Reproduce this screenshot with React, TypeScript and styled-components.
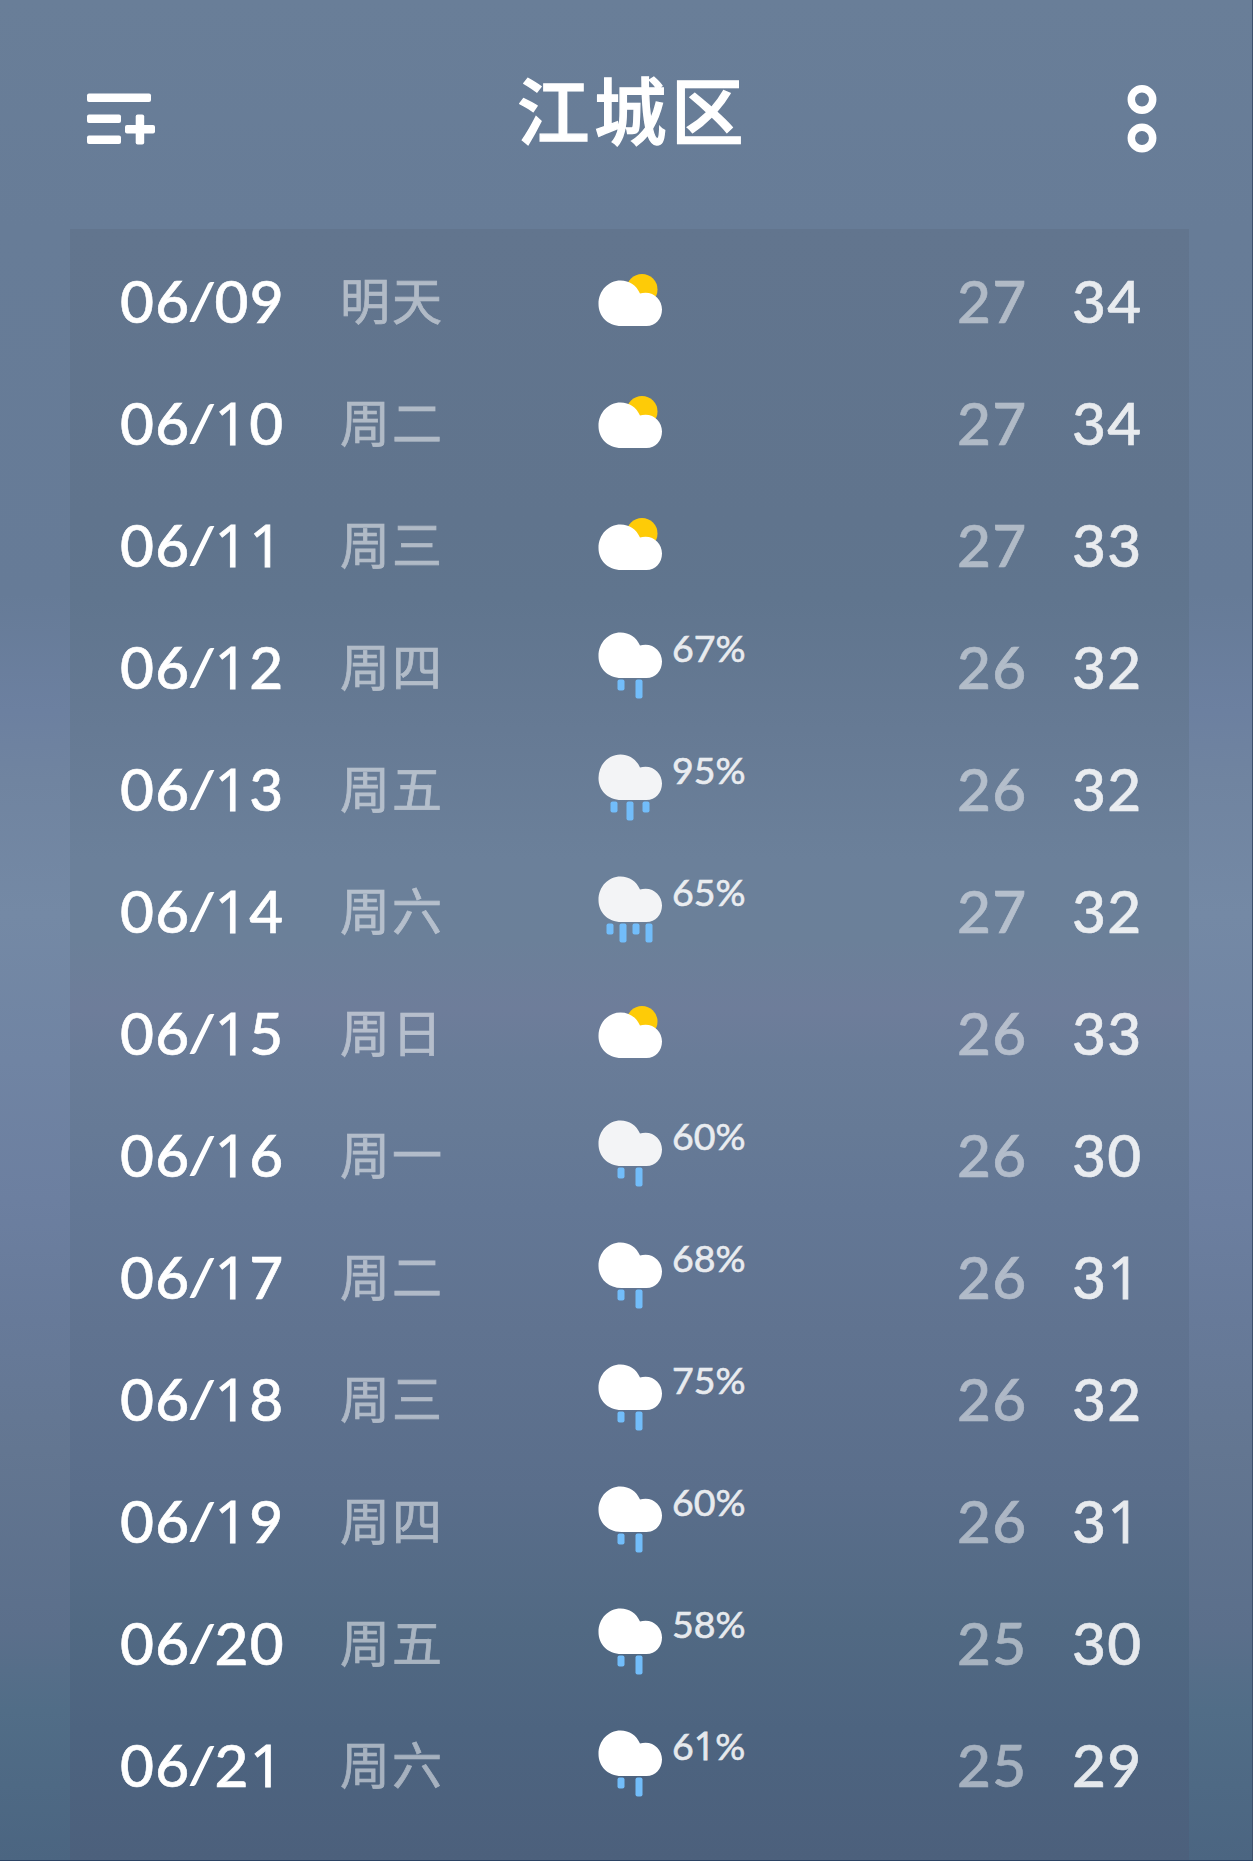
import React from 'react';
import styled, { createGlobalStyle } from 'styled-components';

const Global = createGlobalStyle`
  body { margin: 0; }
  * { box-sizing: border-box; }
`;

const Screen = styled.div`
  width: 1253px;
  height: 1861px;
  overflow: hidden;
  display: flex;
  flex-direction: column;
  color: #fff;
  font-family: Lato, 'Noto Sans CJK SC', sans-serif;
  border-bottom: 1px solid #2b4364;
  border-right: 1px solid #3d506c;
  background: linear-gradient(
    180deg,
    #697e98 0,
    #677c97 230px,
    #667b97 594px,
    #6c80a0 710px,
    #7084a0 780px,
    #7489a5 914px,
    #7084a3 1060px,
    #6c7fa0 1200px,
    #677a99 1320px,
    #637691 1450px,
    #5b6f8b 1630px,
    #516d87 1710px,
    #4b6581 1861px
  );
`;

const Header = styled.header`
  flex: none;
  height: 229px;
  padding: 0 93px 0 84px;
  display: flex;
  justify-content: space-between;
  align-items: flex-start;
`;

const HeaderIcon = styled.svg`
  display: block;
  margin-top: 83px;
`;

const Title = styled.h1`
  margin: 56px 0 0 -18px;
  font-size: 72.5px;
  line-height: 110px;
  font-weight: 500;
  letter-spacing: 4.5px;
  -webkit-text-stroke: 1.3px #fff;
`;

const Panel = styled.main`
  flex: 1;
  width: 1119px;
  margin-left: 70px;
  padding: 11px 48px 0 50px;
  background: linear-gradient(
    180deg,
    #62758e 0,
    #60748d 290px,
    #60758e 370px,
    #667a94 500px,
    #6b809a 630px,
    #6b8099 710px,
    #6e7d9a 780px,
    #697c98 830px,
    #667a96 900px,
    #637795 980px,
    #607390 1100px,
    #5a6e8b 1260px,
    #516983 1400px,
    #4d6480 1500px,
    #4c607c 1632px
  );
`;

const Row = styled.div`
  height: 122px;
  display: grid;
  grid-template-columns: 220px 258px 74px 285px 115px 1fr;
  align-items: center;
`;

const Value = styled.span<{ $opacity?: number }>`
  padding-bottom: 2px;
  font-size: 58.5px;
  line-height: 72px;
  font-weight: 500;
  letter-spacing: 1.4px;
  white-space: nowrap;
  opacity: ${p => p.$opacity ?? 1};
  -webkit-text-stroke: 0.6px #fff;
`;

const One = styled.span`
  font-family: 'Open Sans', sans-serif;
  line-height: 1;
  -webkit-text-stroke: 0.9px #fff;
`;

const Slash = styled.span`
  display: inline-block;
  font-size: 0.84em;
  line-height: 1;
  transform: translateY(-4px) skewX(-5deg);
  -webkit-text-stroke: 1.4px #fff;
`;

const Day = styled.span`
  font-size: 50px;
  line-height: 72px;
  letter-spacing: 2px;
  opacity: 0.5;
  -webkit-text-stroke: 0.7px #fff;
`;

const Chance = styled.span`
  align-self: start;
  margin-top: 20px;
  font-size: 37.5px;
  line-height: 44px;
  opacity: 0.86;
  -webkit-text-stroke: 0.6px #fff;
`;

const WeatherIcon = styled.svg`
  display: block;
`;

type Sky = 'sunny' | 'light' | 'medium' | 'heavy';

const drops: Record<Sky, [number, number][]> = {
  sunny: [],
  light: [[19, 11], [37, 19]],
  medium: [[12, 11], [28, 19], [44, 11]],
  heavy: [[8, 11], [21, 19], [34, 11], [47, 19]],
};

function Weather({ sky, dim }: { sky: Sky; dim?: boolean }) {
  const y = sky === 'sunny' ? 29.5 : 15.5;
  return (
    <WeatherIcon width="64" height="100" viewBox="0 0 64 100">
      {sky === 'sunny' && <circle cx="44" cy="38.5" r="15.5" fill="#fecb07" />}
      <g transform={`translate(0.5 ${y})`}>
        <path
          d="M22 0C31 0 38 5 41.5 13Q44 12.300 47 12.300C56.500 12.300 63.500 20 63.500 29C63.500 38 57 45.500 48 45.500H23C9 45.500 0 35.500 0 23.500C0 10 10 0 22 0Z"
          fill={dim ? '#f3f4f6' : '#fff'}
        />
        {drops[sky].map(([x, h]) => (
          <rect key={x} x={x} y="47" width="7" height={h} rx="2" fill="#72bdfa" />
        ))}
      </g>
    </WeatherIcon>
  );
}

function Digits({ text }: { text: string }) {
  return (
    <>
      {text.split(/([1/])/).map((part, i) => {
        if (part === '1') return <One key={i}>1</One>;
        if (part === '/') return <Slash key={i}>/</Slash>;
        return part;
      })}
    </>
  );
}

const days: [string, string, Sky, string, number, number, boolean?][] = [
  ['06/09', '明天', 'sunny', '', 27, 34],
  ['06/10', '周二', 'sunny', '', 27, 34],
  ['06/11', '周三', 'sunny', '', 27, 33],
  ['06/12', '周四', 'light', '67%', 26, 32],
  ['06/13', '周五', 'medium', '95%', 26, 32, true],
  ['06/14', '周六', 'heavy', '65%', 27, 32, true],
  ['06/15', '周日', 'sunny', '', 26, 33],
  ['06/16', '周一', 'light', '60%', 26, 30, true],
  ['06/17', '周二', 'light', '68%', 26, 31],
  ['06/18', '周三', 'light', '75%', 26, 32],
  ['06/19', '周四', 'light', '60%', 26, 31],
  ['06/20', '周五', 'light', '58%', 25, 30],
  ['06/21', '周六', 'light', '61%', 25, 29],
];

export default function App() {
  return (
    <>
      <Global />
      <Screen>
        <Header>
          <HeaderIcon width="74" height="70" viewBox="0 0 74 70" fill="#fff">
            <rect x="3" y="10.500" width="64" height="8.500" rx="2" />
            <rect x="3" y="31.500" width="34" height="8.500" rx="2" />
            <rect x="3" y="52.500" width="34" height="8.500" rx="2" />
            <rect x="41" y="42" width="30" height="8.500" rx="2" />
            <rect x="51.700" y="31.500" width="8.500" height="30" rx="2" />
          </HeaderIcon>
          <Title>江城区</Title>
          <HeaderIcon width="34" height="74" viewBox="0 0 34 74" fill="none" stroke="#fff" strokeWidth="7.500">
            <circle cx="17" cy="16.500" r="10.700" />
            <circle cx="17" cy="55" r="10.700" />
          </HeaderIcon>
        </Header>
        <Panel>
          {days.map(([date, day, sky, chance, low, high, dim]) => (
            <Row key={date}>
              <Value><Digits text={date} /></Value>
              <Day>{day}</Day>
              <Weather sky={sky} dim={dim} />
              <Chance><Digits text={chance} /></Chance>
              <Value $opacity={0.5}>{low}</Value>
              <Value $opacity={0.86}><Digits text={String(high)} /></Value>
            </Row>
          ))}
        </Panel>
      </Screen>
    </>
  );
}
